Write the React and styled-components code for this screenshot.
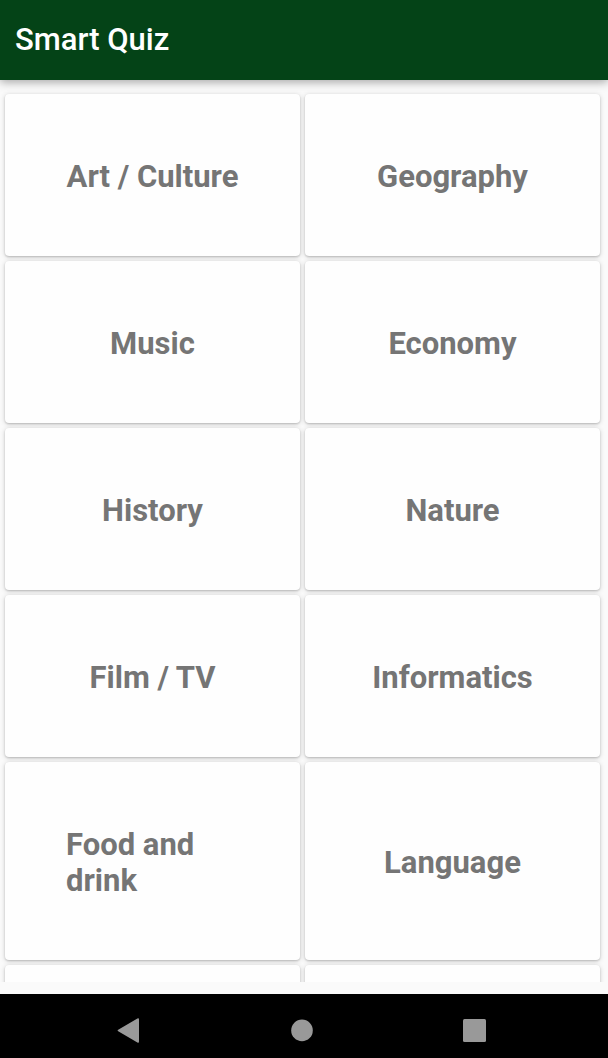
import React from "react";
import styled, { createGlobalStyle } from "styled-components";

const GlobalStyle = createGlobalStyle`
  * { box-sizing: border-box; }
  body {
    margin: 0;
    background: #fafafa;
    font-family: Roboto, "Liberation Sans", sans-serif;
  }
`;

const Screen = styled.div`
  display: flex;
  flex-direction: column;
  height: 100vh;
  background: #fafafa;
`;

const AppBar = styled.header`
  flex: none;
  display: flex;
  align-items: center;
  height: 80px;
  padding: 0 15px;
  background: #044317;
  box-shadow: 0 2px 9px rgba(0, 0, 0, 0.35);
  z-index: 1;
`;

const Title = styled.h1`
  margin: 0;
  color: #fff;
  font-size: 31px;
  font-weight: 500;
  line-height: 36px;
`;

const Categories = styled.main`
  flex: 1;
  min-height: 0;
  overflow: hidden;
  display: grid;
  grid-template-columns: 1fr 1fr;
  grid-auto-rows: max-content;
  gap: 5px;
  margin-bottom: 12px;
  padding: 14px 8px 0 5px;
`;

const Card = styled.button`
  display: flex;
  align-items: center;
  justify-content: center;
  min-height: 162px;
  padding: 65px 61px 61px;
  border: 0;
  border-radius: 4px;
  background: #fefefe;
  box-shadow: 0 1px 2px rgba(0, 0, 0, 0.16), 0 1px 5px rgba(0, 0, 0, 0.18);
  color: #757575;
  font-family: inherit;
  font-size: 31px;
  font-weight: 700;
  line-height: 36px;
  text-align: left;
`;

const NavBar = styled.nav`
  flex: none;
  display: grid;
  grid-template-columns: repeat(3, 1fr);
  height: 64px;
  padding: 10px 47px 0 43px;
  background: #000;
`;

const NavButton = styled.button`
  display: flex;
  align-items: center;
  justify-content: center;
  padding: 0;
  border: 0;
  background: none;
  color: #999;
`;

const NavIcon = ({ children }) => (
  <svg width="26" height="26" viewBox="0 0 26 26" fill="currentColor" aria-hidden="true">
    {children}
  </svg>
);

const categories = [
  "Art / Culture",
  "Geography",
  "Music",
  "Economy",
  "History",
  "Nature",
  "Film / TV",
  "Informatics",
  "Food and drink",
  "Language",
  "",
  "",
];

export default function App() {
  return (
    <>
      <GlobalStyle />
      <Screen>
        <AppBar>
          <Title>Smart Quiz</Title>
        </AppBar>
        <Categories>
          {categories.map((name, i) => (
            <Card key={i} type="button">
              {name}
            </Card>
          ))}
        </Categories>
        <NavBar>
          <NavButton type="button" aria-label="Back">
            <NavIcon>
              <path d="M2.2 11.8 21.4 .6Q23 -.2 23 1.6V23.4Q23 25.2 21.4 24.4L2.2 13.2Q1 12.5 2.2 11.8Z" />
            </NavIcon>
          </NavButton>
          <NavButton type="button" aria-label="Home">
            <NavIcon>
              <circle cx="13" cy="12.4" r="10.8" />
            </NavIcon>
          </NavButton>
          <NavButton type="button" aria-label="Recent apps">
            <NavIcon>
              <rect x="1" y="1" width="23" height="23" rx="1.5" />
            </NavIcon>
          </NavButton>
        </NavBar>
      </Screen>
    </>
  );
}
